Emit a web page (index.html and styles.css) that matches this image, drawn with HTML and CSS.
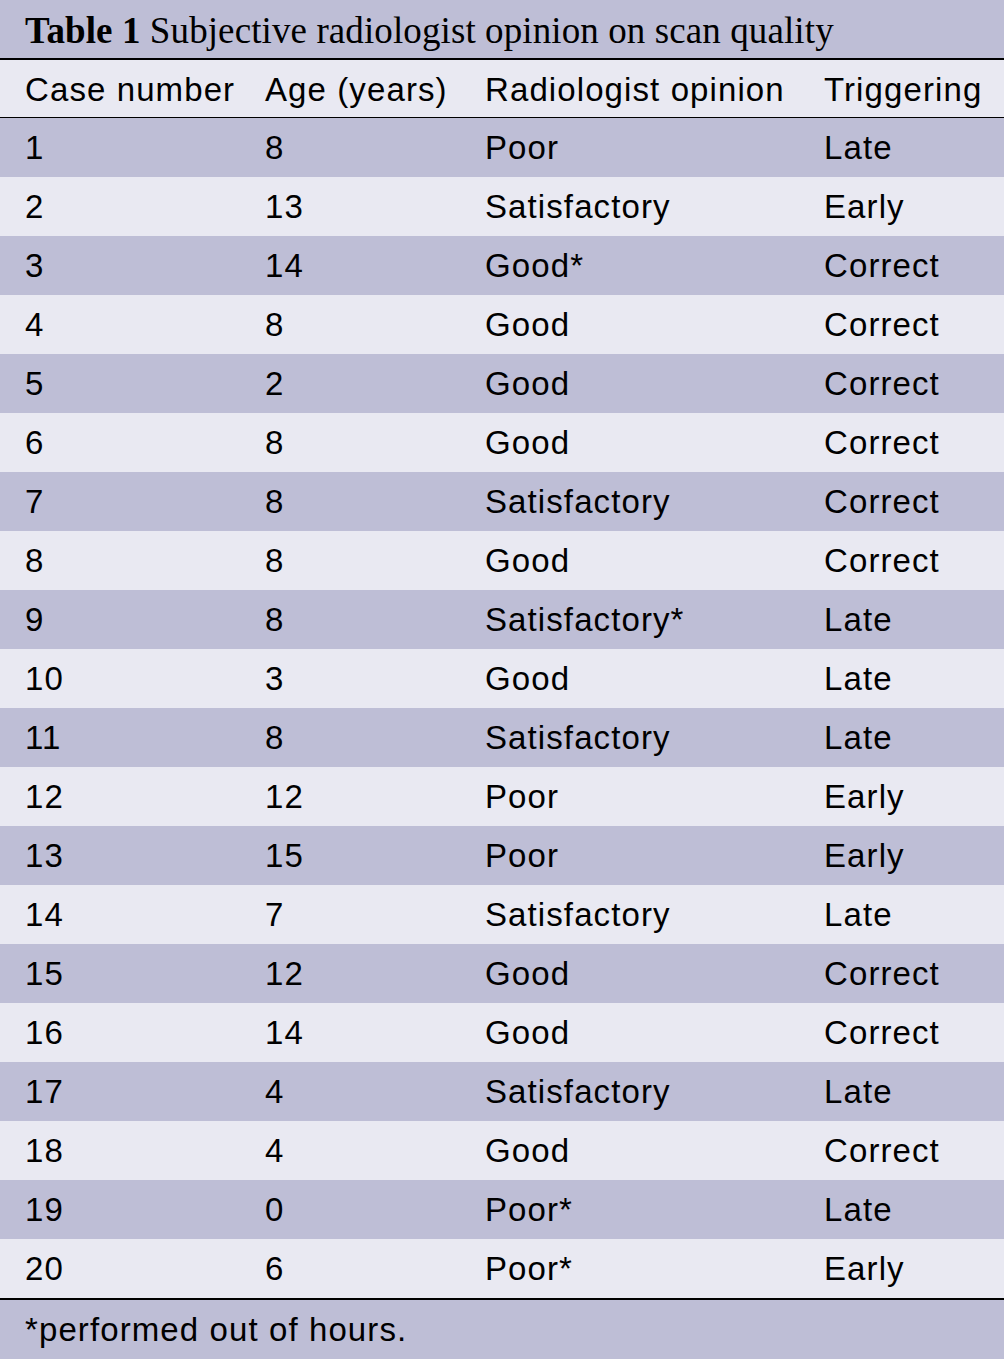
FILE: index.html
```html
<!DOCTYPE html>
<html>
<head>
<meta charset="utf-8">
<link rel="stylesheet" href="styles.css">
</head>
<body>
<div class="wrap">
  <div class="caption"><b>Table 1</b> Subjective radiologist opinion on scan quality</div>
  <table class="tbl">
    <thead>
      <tr><th class="c1">Case number</th><th class="c2">Age (years)</th><th class="c3">Radiologist opinion</th><th class="c4">Triggering</th></tr>
    </thead>
    <tbody>
      <tr><td>1</td><td>8</td><td>Poor</td><td>Late</td></tr>
      <tr><td>2</td><td>13</td><td>Satisfactory</td><td>Early</td></tr>
      <tr><td>3</td><td>14</td><td>Good*</td><td>Correct</td></tr>
      <tr><td>4</td><td>8</td><td>Good</td><td>Correct</td></tr>
      <tr><td>5</td><td>2</td><td>Good</td><td>Correct</td></tr>
      <tr><td>6</td><td>8</td><td>Good</td><td>Correct</td></tr>
      <tr><td>7</td><td>8</td><td>Satisfactory</td><td>Correct</td></tr>
      <tr><td>8</td><td>8</td><td>Good</td><td>Correct</td></tr>
      <tr><td>9</td><td>8</td><td>Satisfactory*</td><td>Late</td></tr>
      <tr><td>10</td><td>3</td><td>Good</td><td>Late</td></tr>
      <tr><td>11</td><td>8</td><td>Satisfactory</td><td>Late</td></tr>
      <tr><td>12</td><td>12</td><td>Poor</td><td>Early</td></tr>
      <tr><td>13</td><td>15</td><td>Poor</td><td>Early</td></tr>
      <tr><td>14</td><td>7</td><td>Satisfactory</td><td>Late</td></tr>
      <tr><td>15</td><td>12</td><td>Good</td><td>Correct</td></tr>
      <tr><td>16</td><td>14</td><td>Good</td><td>Correct</td></tr>
      <tr><td>17</td><td>4</td><td>Satisfactory</td><td>Late</td></tr>
      <tr><td>18</td><td>4</td><td>Good</td><td>Correct</td></tr>
      <tr><td>19</td><td>0</td><td>Poor*</td><td>Late</td></tr>
      <tr><td>20</td><td>6</td><td>Poor*</td><td>Early</td></tr>
    </tbody>
  </table>
  <div class="foot">*performed out of hours.</div>
</div>
</body>
</html>
```
FILE: styles.css
```css
html, body {
  margin: 0;
  padding: 0;
  background: #bebed6;
}
.wrap {
  width: 1004px;
  height: 1359px;
  background: #bebed6;
  color: #000;
  font-family: "Liberation Sans", Arial, sans-serif;
}
.caption {
  height: 60px;
  box-sizing: border-box;
  padding: 11px 0 0 25px;
  font-family: "Liberation Serif", "Times New Roman", serif;
  font-size: 37px;
  line-height: 40px;
  letter-spacing: 0.1px;
  border-bottom: 2px solid #000;
}
.caption b {
  font-weight: bold;
}
.tbl {
  width: 1004px;
  border-collapse: separate;
  border-spacing: 0;
  table-layout: fixed;
}
.tbl th, .tbl td {
  text-align: left;
  font-weight: normal;
  font-size: 33px;
  letter-spacing: 1.1px;
  padding: 0 0 0 25px;
  white-space: nowrap;
  box-sizing: border-box;
}
.tbl th {
  height: 58px;
  background: #e9e9f2;
  border-bottom: 1px solid #000;
  padding-top: 3px;
}
.tbl th.c1 { width: 240px; }
.tbl th.c2 { width: 220px; }
.tbl th.c3 { width: 339px; }
.tbl td {
  height: 59px;
  padding-top: 1px;
}
.tbl tbody tr:nth-child(odd) td { background: #bebed6; }
.tbl tbody tr:nth-child(even) td { background: #e9e9f2; }
.foot {
  height: 61px;
  box-sizing: border-box;
  border-top: 2px solid #000;
  line-height: 59px;
  padding-left: 25px;
  font-size: 33px;
  letter-spacing: 1.1px;
}
```
